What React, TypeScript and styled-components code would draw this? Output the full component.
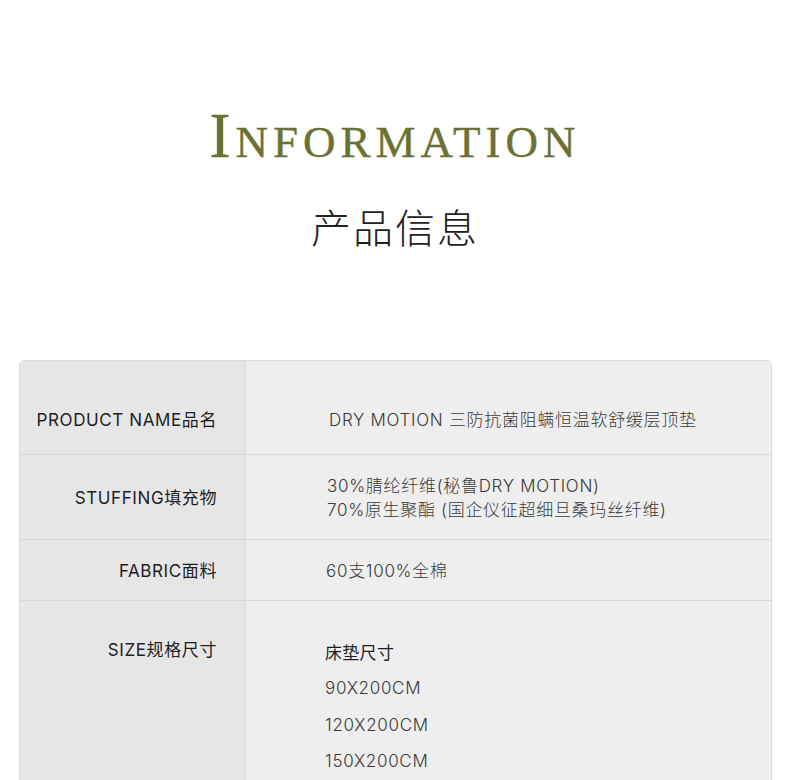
import React from "react";
import styled, { createGlobalStyle } from "styled-components";

const Global = createGlobalStyle`
  html, body { margin: 0; padding: 0; background: #ffffff; }
  body { overflow: hidden; }
`;

const Page = styled.div`
  width: 790px;
  height: 780px;
  overflow: hidden;
  background: #ffffff;
  display: flex;
  flex-direction: column;
  align-items: center;
`;

const Title = styled.h1`
  margin: 106px 0 0;
  font-family: "Liberation Serif", "DejaVu Serif", serif;
  font-weight: 400;
  color: #6b7132;
  font-size: 63px;
  line-height: 60px;
  letter-spacing: 5px;
  -webkit-text-stroke: 0.4px #6b7132;
`;

const Small = styled.span`
  font-size: 45px;
`;

const Subtitle = styled.h2`
  margin: 32px 0 0;
  font-family: "Noto Sans CJK SC", sans-serif;
  font-weight: 300;
  font-size: 40px;
  line-height: 44px;
  color: #222222;
  letter-spacing: 2px;
`;

const Table = styled.div`
  margin-top: 112px;
  align-self: flex-start;
  margin-left: 19px;
  width: 751px;
  border: 1px solid #dcdcdc;
  border-radius: 5px;
  overflow: hidden;
  display: flex;
  flex-direction: column;
  flex-shrink: 0;
`;

const Row = styled.div<{ $h: number; $last?: boolean }>`
  box-sizing: border-box;
  display: grid;
  grid-template-columns: 226px 1fr;
  height: ${(p) => p.$h}px;
  border-bottom: ${(p) => (p.$last ? "none" : "1px solid #d8d8d8")};
`;

const Label = styled.div<{ $top: number }>`
  background: #e6e6e6;
  border-right: 1px solid #d8d8d8;
  padding: ${(p) => p.$top}px 28px 0 0;
  text-align: right;
  font-family: Inter, "Noto Sans CJK SC", sans-serif;
  font-size: 17px;
  line-height: 24px;
  color: #1e1e1e;
  letter-spacing: 0.6px;
`;

const Value = styled.div<{ $top: number; $left: number }>`
  background: #eeeeee;
  padding: ${(p) => p.$top}px 0 0 ${(p) => p.$left}px;
  font-family: Inter, "Noto Sans CJK SC", sans-serif;
  font-weight: 300;
  font-size: 17px;
  line-height: 24px;
  color: #3a3a3a;
  letter-spacing: 0.7px;
  display: flex;
  flex-direction: column;
`;

const SizeHead = styled.div`
  font-weight: 400;
  color: #1e1e1e;
  letter-spacing: 0.3px;
  margin-bottom: 11px;
`;

const SizeItem = styled.div`
  margin-bottom: 12.5px;
`;

export default function App() {
  return (
    <Page>
      <Global />
      <Title>
        I<Small>NFORMATION</Small>
      </Title>
      <Subtitle>产品信息</Subtitle>
      <Table>
        <Row $h={94}>
          <Label $top={47}>PRODUCT NAME品名</Label>
          <Value $top={47} $left={83}>
            DRY MOTION 三防抗菌阻螨恒温软舒缓层顶垫
          </Value>
        </Row>
        <Row $h={85}>
          <Label $top={31}>STUFFING填充物</Label>
          <Value $top={19} $left={81}>
            <div>30%腈纶纤维(秘鲁DRY MOTION)</div>
            <div>70%原生聚酯 (国企仪征超细旦桑玛丝纤维)</div>
          </Value>
        </Row>
        <Row $h={61}>
          <Label $top={19}>FABRIC面料</Label>
          <Value $top={19} $left={80}>
            60支100%全棉
          </Value>
        </Row>
        <Row $h={200} $last>
          <Label $top={37}>SIZE规格尺寸</Label>
          <Value $top={40} $left={79}>
            <SizeHead>床垫尺寸</SizeHead>
            <SizeItem>90X200CM</SizeItem>
            <SizeItem>120X200CM</SizeItem>
            <SizeItem>150X200CM</SizeItem>
          </Value>
        </Row>
      </Table>
    </Page>
  );
}
